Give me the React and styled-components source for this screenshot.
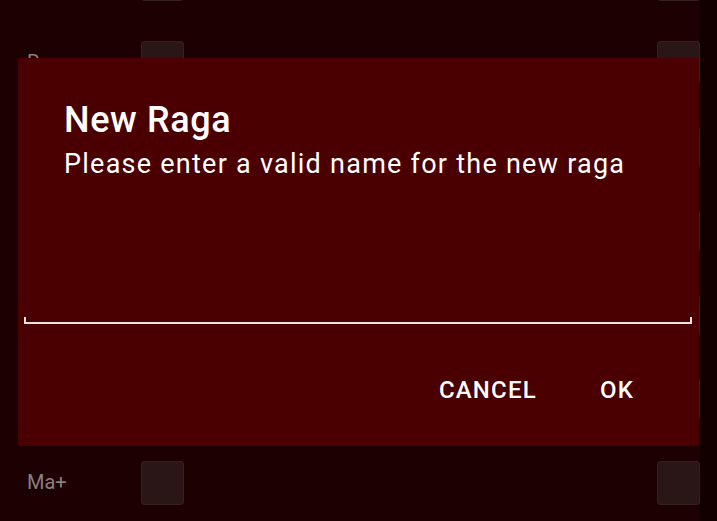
import React from 'react';
import styled, { createGlobalStyle } from 'styled-components';

const GlobalStyle = createGlobalStyle`
	html, body {
		margin: 0;
		padding: 0;
		background: #1c0002;
		font-family: Roboto, "Noto Sans", sans-serif;
	}
`;

const Screen = styled.div`
	position: relative;
	width: 717px;
	height: 521px;
	overflow: hidden;
	display: flex;
	background: #1c0002;
`;

const NoteList = styled.ul`
	flex: 0 0 700px;
	margin: -43px 0 0;
	padding: 0;
	list-style: none;
	display: flex;
	flex-direction: column;
	gap: 40px;
`;

const NoteRow = styled.li`
	height: 44px;
	flex-shrink: 0;
	display: flex;
	align-items: center;
	padding-left: 27px;
`;

const NoteLabel = styled.span`
	width: 114px;
	font-size: 20px;
	margin-bottom: 2px;
	color: #8a7f80;
`;

const Pad = styled.div`
	width: 43px;
	height: 44px;
	box-sizing: border-box;
	border-radius: 4px;
	background: #2b1617;
	border: 1px solid rgba(255, 255, 255, 0.05);
	margin-left: ${({ $right }) => ($right ? 'auto' : '0')};
`;

const Edge = styled.div`
	flex: 1;
	background: #120000;
`;

const Dialog = styled.div`
	position: absolute;
	left: 18px;
	top: 58px;
	width: 681px;
	height: 388px;
	box-sizing: border-box;
	background: #4a0000;
	padding-top: 42px;
	display: flex;
	flex-direction: column;
	color: #ffffff;
`;

const Title = styled.h2`
	margin: 0 0 0 46px;
	font-size: 36px;
	line-height: 40px;
	letter-spacing: 0.6px;
	font-weight: 500;
`;

const Message = styled.p`
	margin: 8px 0 0 46px;
	font-size: 27px;
	line-height: 32px;
	letter-spacing: 1.25px;
	font-weight: 400;
`;

const NameInput = styled.input`
	display: block;
	margin: 110px 7px 0 6px;
	height: 34px;
	box-sizing: border-box;
	background: transparent;
	border: none;
	outline: none;
	color: #ffffff;
	font: inherit;
	font-size: 24px;
	padding: 0 8px;
	background-image: linear-gradient(#f2e4e4, #f2e4e4), linear-gradient(#f2e4e4, #f2e4e4),
		linear-gradient(#f2e4e4, #f2e4e4);
	background-size: 100% 2px, 2px 7px, 2px 7px;
	background-position: left bottom, left bottom, right bottom;
	background-repeat: no-repeat;
`;

const Actions = styled.div`
	margin-top: 52px;
	display: flex;
	justify-content: flex-end;
	gap: 63px;
	padding-right: 65px;
`;

const ActionButton = styled.button`
	background: none;
	border: none;
	padding: 0;
	color: #ffffff;
	font-family: Roboto, sans-serif;
	font-size: 24px;
	line-height: 28px;
	letter-spacing: 1.2px;
	font-weight: 500;
	text-transform: uppercase;
	cursor: pointer;
`;

const notes = ['', 'Re', 'Re+', 'Ga', 'Ga+', 'Ma', 'Ma+'];

export default function App() {
	return (
		<>
			<GlobalStyle />
			<Screen>
				<NoteList>
					{notes.map((n, i) => (
						<NoteRow key={i}>
							<NoteLabel>{n}</NoteLabel>
							<Pad />
							<Pad $right />
						</NoteRow>
					))}
				</NoteList>
				<Edge />
				<Dialog>
					<Title>New Raga</Title>
					<Message>Please enter a valid name for the new raga</Message>
					<NameInput />
					<Actions>
						<ActionButton>Cancel</ActionButton>
						<ActionButton>OK</ActionButton>
					</Actions>
				</Dialog>
			</Screen>
		</>
	);
}
